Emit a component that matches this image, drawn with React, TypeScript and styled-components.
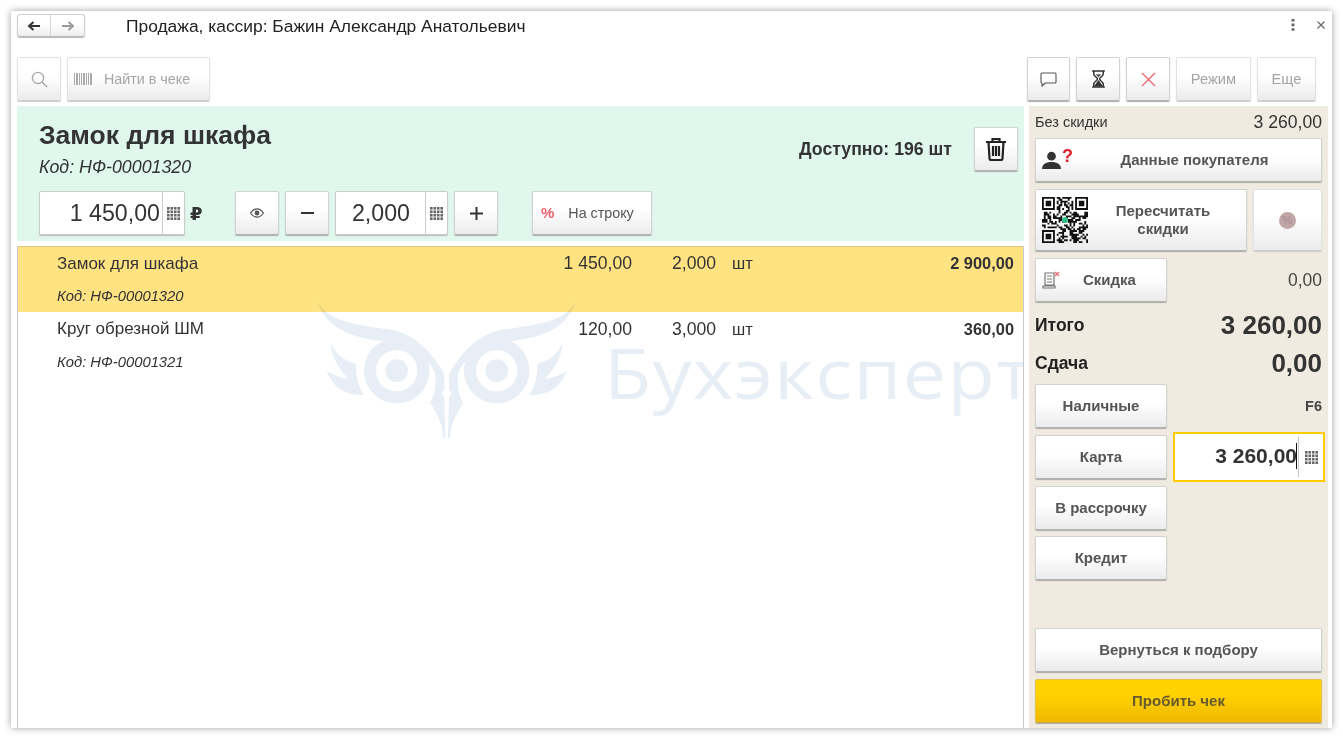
import React from "react";
import styled, { createGlobalStyle } from "styled-components";

const Global = createGlobalStyle`
  html, body { margin: 0; padding: 0; background: #fff; overflow: hidden; }
  body { width: 1343px; height: 740px; font-family: "Liberation Sans", Arial, sans-serif; color: #333; }
  * { box-sizing: border-box; }
`;

const Stage = styled.div`
  width: 1343px;
  height: 740px;
  padding: 11px;
  filter: blur(0.45px);
`;
const Win = styled.div`
  width: 1321px;
  height: 717px;
  background: #fff;
  box-shadow: 0 0 7px rgba(0, 0, 0, 0.38);
  padding: 0 4px 0 6px;
  display: flex;
  flex-direction: column;
  overflow: hidden;
`;
const TitleBar = styled.div`
  height: 46px;
  padding-top: 3px;
  display: flex;
  align-items: flex-start;
`;
const Nav = styled.div`
  width: 68px;
  height: 23px;
  display: flex;
  border: 1px solid #cfcfcf;
  border-bottom-color: #b5b5b5;
  border-radius: 3px;
  background: linear-gradient(#fff 40%, #eee);
  box-shadow: 0 1px 1px #bbb;
`;
const NavCell = styled.div<{ $w: number; $line?: boolean }>`
  width: ${(p) => p.$w}px;
  display: flex;
  align-items: center;
  justify-content: center;
  border-right: ${(p) => (p.$line ? "1px solid #d5d5d5" : "none")};
`;
const Title = styled.div`
  margin-left: 41px;
  font-size: 17.4px;
  line-height: 24px;
  color: #222;
`;
const TitleTools = styled.div`
  margin-left: auto;
  width: 34px;
  height: 22px;
  margin-right: 3px;
  display: flex;
  align-items: center;
  justify-content: space-between;
`;
const Toolbar = styled.div`
  height: 49px;
  display: flex;
  gap: 6px;
  padding-right: 12px;
`;
const ToolSpacer = styled.div`
  flex: 1;
`;
const Btn = styled.div<{ $w?: number; $h?: number; $off?: boolean; $size?: number; $bold?: boolean; $ml?: number }>`
  flex: none;
  width: ${(p) => (p.$w ? `${p.$w}px` : "auto")};
  height: ${(p) => p.$h ?? 44}px;
  margin-left: ${(p) => p.$ml ?? 0}px;
  display: flex;
  align-items: center;
  justify-content: center;
  background: linear-gradient(#fff 42%, #ebebeb);
  border: 1px solid ${(p) => (p.$off ? "#e2e2e2" : "#d2d2d2")};
  border-bottom-color: ${(p) => (p.$off ? "#cfcfcf" : "#b4b4b4")};
  border-radius: 2px;
  box-shadow: 0 1px 1px ${(p) => (p.$off ? "#ccc" : "#aaa")};
  color: ${(p) => (p.$off ? "#a5a5a5" : "#555")};
  font-size: ${(p) => p.$size ?? 15}px;
  font-weight: ${(p) => (p.$bold ? 700 : 400)};
  text-align: center;
  line-height: 18px;
  white-space: nowrap;
`;
const IconBtnText = styled.span<{ $ml: number }>`
  margin-left: ${(p) => p.$ml}px;
`;
const SpreadBtn = styled(Btn)`
  justify-content: flex-start;
  padding-left: 6px;
`;
const Main = styled.div`
  flex: 1;
  display: flex;
  gap: 5px;
  min-height: 0;
`;
const Left = styled.div`
  width: 1007px;
  display: flex;
  flex-direction: column;
  gap: 5px;
`;
const Card = styled.div`
  height: 135px;
  background: #e0f7ee;
  padding: 0 6px 6px 22px;
  display: flex;
  flex-direction: column;
  justify-content: space-between;
`;
const CardTop = styled.div`
  display: flex;
  align-items: flex-start;
`;
const NameBlock = styled.div`
  padding-top: 14px;
  flex: 1;
`;
const Name = styled.div`
  font-size: 26.5px;
  font-weight: 700;
  line-height: 30px;
  color: #333;
`;
const Code = styled.div`
  margin-top: 6px;
  font-size: 17.8px;
  font-style: italic;
  line-height: 22px;
  color: #333;
`;
const Avail = styled.div`
  margin: 33px 22px 0 0;
  font-size: 17.7px;
  font-weight: 700;
  line-height: 20px;
`;
const TrashBtn = styled(Btn)`
  margin-top: 21px;
`;
const Controls = styled.div`
  display: flex;
  align-items: center;
`;
const Field = styled.div<{ $w: number; $ml?: number }>`
  width: ${(p) => p.$w}px;
  height: 44px;
  margin-left: ${(p) => p.$ml ?? 0}px;
  display: flex;
  background: #fff;
  border: 1px solid #cdcdcd;
  border-radius: 2px;
  box-shadow: 0 1px 1px #bbb;
`;
const FieldValue = styled.div<{ $pr: number }>`
  flex: 1;
  padding-right: ${(p) => p.$pr}px;
  text-align: right;
  font-size: 23.2px;
  line-height: 42px;
  color: #333;
`;
const KeyCell = styled.div`
  width: 22px;
  border-left: 1px solid #cdcdcd;
  display: flex;
  align-items: center;
  justify-content: center;
`;
const Ruble = styled.div`
  width: 50px;
  padding-left: 5px;
  font-family: "DejaVu Sans", sans-serif;
  font-size: 18px;
  font-weight: 700;
  color: #333;
`;
const Table = styled.div`
  position: relative;
  flex: 1;
  border-left: 1px solid #c9c9c9;
  border-right: 1px solid #c9c9c9;
  overflow: hidden;
`;
const Row = styled.div<{ $sel?: boolean }>`
  height: 65.5px;
  background: ${(p) => (p.$sel ? "#ffe383" : "transparent")};
  border-top: ${(p) => (p.$sel ? "1px solid #dcc680" : "none")};
  display: grid;
  grid-template-columns: 39px 200px 375px 84px 16px 1fr 9px;
  grid-template-rows: ${(p) => (p.$sel ? "33px 32px" : "35px 31px")};
  align-items: center;
  font-size: 17px;
  color: #333;
`;
const CName = styled.div`
  grid-column: 2;
  grid-row: 1;
  white-space: nowrap;
`;
const CNum = styled.div<{ $c: number }>`
  grid-column: ${(p) => p.$c};
  grid-row: 1;
  text-align: right;
  font-size: 17.6px;
`;
const CUnit = styled.div`
  grid-column: 6;
  grid-row: 1;
  font-size: 16.5px;
`;
const CTotal = styled.div`
  grid-column: 6;
  grid-row: 1;
  text-align: right;
  font-weight: 700;
  font-size: 16.4px;
`;
const CCode = styled.div`
  grid-column: 2;
  grid-row: 2;
  font-style: italic;
  font-size: 14.8px;
`;
const Watermark = styled.div`
  position: absolute;
  left: 282px;
  top: 44px;
  width: 740px;
  height: 160px;
  display: flex;
  mix-blend-mode: multiply;
  pointer-events: none;
`;
const WaterText = styled.div`
  position: absolute;
  left: 304px;
  top: 52px;
  font-family: "Open Sans", sans-serif;
  font-size: 69px;
  letter-spacing: 1.2px;
  line-height: 60px;
  color: #e8eef6;
  white-space: nowrap;
  transform: scaleX(1.12);
  transform-origin: left center;
`;
const Panel = styled.div`
  width: 299px;
  background: #f0ebe0;
  padding: 6px 6px 5px;
  display: flex;
  flex-direction: column;
`;
const PlainRow = styled.div`
  height: 20px;
  margin-bottom: 6px;
  display: flex;
  align-items: center;
  justify-content: space-between;
  font-size: 14.5px;
  color: #333;
`;
const PlainValue = styled.span`
  font-size: 17.6px;
`;
const BtnRow = styled.div<{ $mb?: number }>`
  display: flex;
  align-items: center;
  gap: 6px;
  margin-bottom: ${(p) => p.$mb ?? 7}px;
`;
const RightVal = styled.div<{ $size?: number; $bold?: boolean }>`
  margin-left: auto;
  font-size: ${(p) => p.$size ?? 17.5}px;
  font-weight: ${(p) => (p.$bold ? 700 : 400)};
  color: #444;
`;
const TotalRow = styled.div<{ $mb?: number }>`
  height: 38px;
  margin-bottom: ${(p) => p.$mb ?? 0}px;
  display: flex;
  align-items: center;
  justify-content: space-between;
  font-size: 17.5px;
  font-weight: 700;
  color: #222;
`;
const TotalValue = styled.span`
  font-size: 26px;
  color: #333;
`;
const PayField = styled.div`
  width: 152px;
  height: 50px;
  margin: -3px -3px -3px 0;
  display: flex;
  background: #fff;
  border: 2px solid #ffcc00;
  padding: 3px 0;
`;
const PayValue = styled.div`
  flex: 1;
  position: relative;
  text-align: right;
  padding-right: 1px;
  font-size: 21px;
  font-weight: 700;
  line-height: 38px;
  color: #333;
`;
const Caret = styled.span`
  position: absolute;
  right: 1px;
  top: 6px;
  width: 1px;
  height: 26px;
  background: #111;
`;
const PayKey = styled(KeyCell)`
  width: 25px;
  border-left-color: #c5c5c5;
`;
const Bottom = styled.div`
  margin-top: auto;
  display: flex;
  flex-direction: column;
  gap: 7px;
`;
const YellowBtn = styled(Btn)`
  background: linear-gradient(#ffd200 35%, #f0b800);
  border-color: #e6c44a;
  border-bottom-color: #c9a53a;
  color: #665a30;
`;
const Question = styled.span`
  position: absolute;
  left: 20px;
  top: 2px;
  font-size: 18px;
  font-weight: 700;
  color: #e0202c;
`;
const PersonWrap = styled.div<{ $w?: number }>`
  position: relative;
  flex: none;
  width: ${(p) => p.$w ?? 46}px;
  height: 30px;
  display: flex;
  align-items: center;
`;
const FullRow = styled.div`
  width: 100%;
  height: 100%;
  display: flex;
  align-items: center;
`;
const FullText = styled.div`
  flex: 1;
  text-align: center;
`;
const PctDot = styled.div`
  width: 17px;
  height: 17px;
  border-radius: 50%;
  background: #c1a6a8;
  color: #a98a8d;
  font-size: 11px;
  line-height: 17px;
  text-align: center;
`;
const PctText = styled.span`
  color: #f0616f;
  font-size: 15px;
  font-weight: 700;
`;
const TinyGap = styled.span`
  display: inline-block;
  width: 2px;
`;

const Keypad = ({ size = 13 }: { size?: number }) => {
  const cells: React.ReactNode[] = [];
  for (let y = 0; y < 4; y++)
    for (let x = 0; x < 4; x++)
      cells.push(<rect key={`${x}-${y}`} x={x * 3.5} y={y * 3.5} width="2.6" height="2.6" fill="#666" />);
  return (
    <svg width={size} height={size} viewBox="0 0 13.1 13.1">
      {cells}
    </svg>
  );
};

const finder = (x: number, y: number) => `M${x} ${y}h7v7h-7zM${x + 1} ${y + 1}v5h5v-5zM${x + 2} ${y + 2}h3v3h-3z`;
const qrPath = (() => {
  let seed = 1337;
  let d = finder(0, 0) + finder(18, 0) + finder(0, 18);
  for (let y = 0; y < 25; y++)
    for (let x = 0; x < 25; x++) {
      seed = (seed * 75 + 74) % 65537;
      const inF = (x < 8 && y < 8) || (x > 16 && y < 8) || (x < 8 && y > 16);
      if (!inF && seed % 100 < 52) d += `M${x} ${y}h1v1h-1z`;
    }
  return d;
})();

const Qr = () => (
  <svg width="46" height="46" viewBox="0 0 25 25">
    <path d={qrPath} fill="#111" fillRule="evenodd" />
    <circle cx="12.5" cy="12.5" r="1.6" fill="#2ec489" />
  </svg>
);

const Owl = () => (
  <svg width="300" height="160" viewBox="0 0 900 480">
    {[0, 1].map((i) => (
      <g key={i} transform={i ? "translate(880 0) scale(-1 1)" : undefined} fill="#e8eef6">
        <path d="M52 32C80 85 130 100 265 118C340 128 395 185 433 252V300C424 306 424 314 433 320L436 445H430C428 405 415 375 390 338C402 320 410 290 405 250C395 225 375 200 350 180C320 155 280 152 240 152C150 142 75 110 52 32Z" />
        <path fillRule="evenodd" d="M290 144a98 98 0 1 0 .01 0zM290 180a62 62 0 1 1-.01 0z" />
        <circle cx="290" cy="242" r="34" />
        <path d="M92 158C105 190 130 210 168 222C166 255 175 290 192 315C150 318 100 300 80 243C100 255 125 265 145 266C115 235 95 200 92 158Z" />
      </g>
    ))}
  </svg>
);

const App = () => (
  <>
    <Global />
    <Stage>
      <Win>
        <TitleBar>
          <Nav>
            <NavCell $w={33} $line>
              <svg width="14" height="12" viewBox="0 0 14 12">
                <path d="M13 6H4M6.5 2 2 6l4.5 4" fill="none" stroke="#333" strokeWidth="2" />
              </svg>
            </NavCell>
            <NavCell $w={33}>
              <svg width="14" height="12" viewBox="0 0 14 12">
                <path d="M1 6h9M7.5 2 12 6l-4.5 4" fill="none" stroke="#999" strokeWidth="2" />
              </svg>
            </NavCell>
          </Nav>
          <Title>Продажа, кассир: Бажин Александр Анатольевич</Title>
          <TitleTools>
            <svg width="4" height="12" viewBox="0 0 4 12">
              <path d="M.5 0h3v2.6h-3zM.5 4.6h3v2.6h-3zM.5 9.2h3v2.6h-3z" fill="#666" />
            </svg>
            <svg width="8" height="8" viewBox="0 0 8 8">
              <path d="M.5.5l7 7M7.5.5l-7 7" stroke="#666" strokeWidth="1.2" />
            </svg>
          </TitleTools>
        </TitleBar>
        <Toolbar>
          <Btn $w={44} $off>
            <svg width="17" height="17" viewBox="0 0 17 17">
              <circle cx="7" cy="7" r="5.6" fill="none" stroke="#aaa" strokeWidth="1.3" />
              <path d="M11 11l5 5" stroke="#aaa" strokeWidth="1.6" />
            </svg>
          </Btn>
          <SpreadBtn $w={143} $off $size={14.3}>
            <svg width="18" height="12" viewBox="0 0 18 12">
              <path d="M0 0h1v12H0zM2 0h2v12H2zM5 0h1v12H5zM7 0h1v12H7zM9 0h2v12H9zM12 0h1v12h-1zM14 0h1v12h-1zM16 0h2v12h-2z" fill="#aaa" />
            </svg>
            <IconBtnText $ml={12}>Найти в чеке</IconBtnText>
          </SpreadBtn>
          <ToolSpacer />
          <Btn $w={43}>
            <svg width="17" height="15" viewBox="0 0 17 15">
              <path d="M2 1h13a1 1 0 0 1 1 1v8a1 1 0 0 1-1 1H5.500L2 14V11.500L1 10V2a1 1 0 0 1 1-1z" fill="none" stroke="#555" strokeWidth="1.1" />
            </svg>
          </Btn>
          <Btn $w={44}>
            <svg width="15" height="18" viewBox="0 0 14 17">
              <path d="M1 1h12M1 16h12M2.500 1v2.500C2.500 6 6 7 6 8.500S2.500 11 2.500 13.500V16M11.500 1v2.500C11.500 6 8 7 8 8.500s3.500 2.500 3.500 5V16" fill="none" stroke="#333" strokeWidth="1.4" />
              <path d="M7 9.500 3.500 14.500v1h7v-1z" fill="#333" />
              <path d="M4.500 4h5L7 7z" fill="#555" />
            </svg>
          </Btn>
          <Btn $w={44}>
            <svg width="15" height="15" viewBox="0 0 15 15">
              <path d="M1 1l13 13M14 1 1 14" stroke="#ee6a72" strokeWidth="1.4" />
            </svg>
          </Btn>
          <Btn $w={75} $off $size={14.7}>Режим</Btn>
          <Btn $w={59} $off $size={14.7}>Еще</Btn>
        </Toolbar>
        <Main>
          <Left>
            <Card>
              <CardTop>
                <NameBlock>
                  <Name>Замок для шкафа</Name>
                  <Code>Код: НФ-00001320</Code>
                </NameBlock>
                <Avail>Доступно: 196 шт</Avail>
                <TrashBtn $w={44}>
                  <svg width="22" height="24" viewBox="0 0 22 24">
                    <path d="M1 5h20M7.500 5V2h7v3M3.500 5l1 16.500a1.500 1.500 0 0 0 1.500 1.500h10a1.500 1.500 0 0 0 1.500-1.500l1-16.500M8 9v10M11 9v10M14 9v10" fill="none" stroke="#222" strokeWidth="2.200" />
                  </svg>
                </TrashBtn>
              </CardTop>
              <Controls>
                <Field $w={146}>
                  <FieldValue $pr={2}>1 450,00</FieldValue>
                  <KeyCell><Keypad /></KeyCell>
                </Field>
                <Ruble>₽</Ruble>
                <Btn $w={44}>
                  <svg width="14" height="10" viewBox="0 0 14 10">
                    <path d="M.500 5C3 1.500 5 .800 7 .800S11 1.500 13.500 5C11 8.500 9 9.200 7 9.200S3 8.500 .500 5z" fill="none" stroke="#555" strokeWidth="1.2" />
                    <circle cx="7" cy="5" r="2.400" fill="#555" />
                  </svg>
                </Btn>
                <Btn $w={44} $ml={6}>
                  <svg width="13" height="2" viewBox="0 0 13 2"><path d="M0 0h13v2H0z" fill="#333" /></svg>
                </Btn>
                <Field $w={113} $ml={6}>
                  <FieldValue $pr={15}>2,000</FieldValue>
                  <KeyCell><Keypad /></KeyCell>
                </Field>
                <Btn $w={44} $ml={6}>
                  <svg width="13" height="13" viewBox="0 0 13 13"><path d="M5.500 0h2v5.500H13v2H7.500V13h-2V7.500H0v-2h5.500z" fill="#333" /></svg>
                </Btn>
                <SpreadBtn $w={120} $ml={34} $size={14.3}>
                  <TinyGap />
                  <PctText>%</PctText>
                  <IconBtnText $ml={14}>На строку</IconBtnText>
                </SpreadBtn>
              </Controls>
            </Card>
            <Table>
              <Row $sel>
                <CName>Замок для шкафа</CName>
                <CNum $c={3}>1 450,00</CNum>
                <CNum $c={4}>2,000</CNum>
                <CUnit>шт</CUnit>
                <CTotal>2 900,00</CTotal>
                <CCode>Код: НФ-00001320</CCode>
              </Row>
              <Row>
                <CName>Круг обрезной ШМ</CName>
                <CNum $c={3}>120,00</CNum>
                <CNum $c={4}>3,000</CNum>
                <CUnit>шт</CUnit>
                <CTotal>360,00</CTotal>
                <CCode>Код: НФ-00001321</CCode>
              </Row>
              <Watermark>
                <Owl />
                <WaterText>Бухэксперт</WaterText>
              </Watermark>
            </Table>
          </Left>
          <Panel>
            <PlainRow>
              <span>Без скидки</span>
              <PlainValue>3 260,00</PlainValue>
            </PlainRow>
            <BtnRow>
              <SpreadBtn $w={287} $bold>
                <FullRow>
                  <PersonWrap>
                    <svg width="19" height="19" viewBox="0 0 20 19">
                      <circle cx="10" cy="5" r="4.600" fill="#333" />
                      <path d="M0 18.500c0-5 4-7.500 10-7.500s10 2.500 10 7.500z" fill="#333" />
                    </svg>
                    <Question>?</Question>
                  </PersonWrap>
                  <FullText>Данные покупателя</FullText>
                  <PersonWrap $w={20} />
                </FullRow>
              </SpreadBtn>
            </BtnRow>
            <BtnRow>
              <SpreadBtn $w={212} $h={62} $bold>
                <Qr />
                <FullText>Пересчитать<br />скидки</FullText>
                <PersonWrap $w={8} />
              </SpreadBtn>
              <Btn $w={69} $h={62} $off><PctDot>%</PctDot></Btn>
            </BtnRow>
            <BtnRow $mb={4}>
              <SpreadBtn $w={132} $bold>
                <svg width="18" height="18" viewBox="0 0 18 18">
                  <path d="M3 2h9v12H3zM1 15h12v2H1z" fill="none" stroke="#777" strokeWidth="1.2" />
                  <path d="M5 5h5M5 8h5M5 11h5" stroke="#777" strokeWidth="1" />
                  <path d="M13 1l4 4M17 1l-4 4" stroke="#ee6a72" strokeWidth="1.3" />
                </svg>
                <IconBtnText $ml={23}>Скидка</IconBtnText>
              </SpreadBtn>
              <RightVal>0,00</RightVal>
            </BtnRow>
            <TotalRow>
              <span>Итого</span>
              <TotalValue>3 260,00</TotalValue>
            </TotalRow>
            <TotalRow $mb={2}>
              <span>Сдача</span>
              <TotalValue>0,00</TotalValue>
            </TotalRow>
            <BtnRow>
              <Btn $w={132} $bold>Наличные</Btn>
              <RightVal $size={14.5} $bold>F6</RightVal>
            </BtnRow>
            <BtnRow>
              <Btn $w={132} $bold>Карта</Btn>
              <PayField>
                <PayValue>3 260,00<Caret /></PayValue>
                <PayKey><Keypad /></PayKey>
              </PayField>
            </BtnRow>
            <BtnRow $mb={6}>
              <Btn $w={132} $bold>В рассрочку</Btn>
            </BtnRow>
            <BtnRow $mb={0}>
              <Btn $w={132} $bold>Кредит</Btn>
            </BtnRow>
            <Bottom>
              <Btn $w={287} $bold>Вернуться к подбору</Btn>
              <YellowBtn $w={287} $bold>Пробить чек</YellowBtn>
            </Bottom>
          </Panel>
        </Main>
      </Win>
    </Stage>
  </>
);

export default App;
